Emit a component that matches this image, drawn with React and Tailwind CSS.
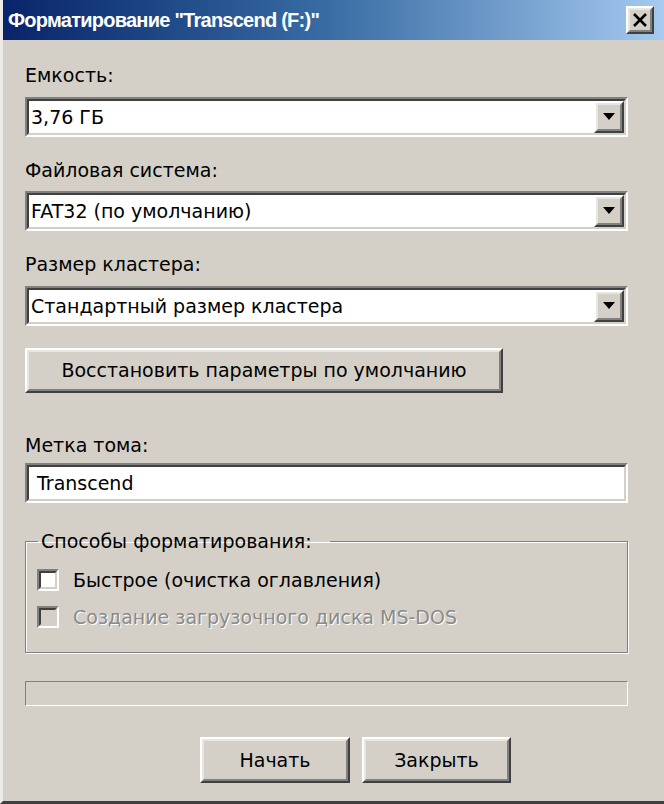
import React from "react";

const font = { fontFamily: '"DejaVu Sans", Verdana, sans-serif' };

function Label({ children, className = "" }) {
  return (
    <div className={"text-[19px] leading-[22px] text-black " + className}>{children}</div>
  );
}

function Sunken({ children, className = "" }) {
  return (
    <div
      className={
        "border-2 border-t-[#808080] border-l-[#808080] border-b-white border-r-white " +
        className
      }
    >
      <div className="h-full border-2 border-t-[#404040] border-l-[#404040] border-b-[#d4d0c8] border-r-[#d4d0c8] bg-white">
        {children}
      </div>
    </div>
  );
}

function Raised({ children, className = "" }) {
  return (
    <div
      className={
        "border-2 border-t-white border-l-white border-b-[#404040] border-r-[#404040] bg-[#d4d0c8] " +
        className
      }
    >
      <div className="flex h-full items-center justify-center border-2 border-t-[#e8e6e1] border-l-[#e8e6e1] border-b-[#808080] border-r-[#808080]">
        {children}
      </div>
    </div>
  );
}

function Combo({ value }) {
  return (
    <Sunken className="h-[40px]">
      <div className="flex h-full items-center">
        <div className="flex-1 pl-[2px] text-[19px] text-black">{value}</div>
        <Raised className="h-full w-[30px]">
          <svg width="12" height="8" viewBox="0 0 12 8">
            <polygon points="0,0 12,0 6,7" fill="#000" />
          </svg>
        </Raised>
      </div>
    </Sunken>
  );
}

function Check({ children, disabled }) {
  return (
    <div className="flex items-center gap-[14px]">
      <div className="h-[22px] w-[22px] border-2 border-t-[#808080] border-l-[#808080] border-b-white border-r-white">
        <div
          className={
            "h-full w-full border-2 border-t-[#404040] border-l-[#404040] border-b-[#d4d0c8] border-r-[#d4d0c8] " +
            (disabled ? "bg-[#d4d0c8]" : "bg-white")
          }
        />
      </div>
      <div
        className={
          "text-[19px] leading-[22px] " +
          (disabled ? "text-[#8a8a8a] [text-shadow:1px_1px_0_#fff]" : "text-black")
        }
      >
        {children}
      </div>
    </div>
  );
}

export default function App() {
  return (
    <div
      style={font}
      className="flex h-[804px] w-[664px] flex-col overflow-hidden border-b-[3px] border-l-[3px] border-b-[#404040] border-l-[#ecebe7] bg-[#d4d0c8]"
    >
      <div className="flex h-[40px] shrink-0 items-center justify-between bg-gradient-to-r from-[#0a246a] via-[#3a6ea5] to-[#a6caf0] pl-[5px] pr-[10px]">
        <div
          className="text-[20px] font-bold leading-none tracking-[-0.75px] text-white"
          style={{ fontFamily: '"Liberation Sans", Arial, sans-serif' }}
        >
          Форматирование "Transcend (F:)"
        </div>
        <Raised className="h-[28px] w-[28px]">
          <svg width="16" height="14" viewBox="0 0 16 14">
            <path d="M2 1 L14 13 M14 1 L2 13" stroke="#000" strokeWidth="2.6" />
          </svg>
        </Raised>
      </div>

      <div className="flex flex-col pl-[22px] pr-[36px]">
        <Label className="mt-[24px]">Емкость:</Label>
        <div className="mt-[11px]">
          <Combo value="3,76 ГБ" />
        </div>
        <Label className="mt-[22px]">Файловая система:</Label>
        <div className="mt-[10px]">
          <Combo value="FAT32 (по умолчанию)" />
        </div>
        <Label className="mt-[22px]">Размер кластера:</Label>
        <div className="mt-[11px]">
          <Combo value="Стандартный размер кластера" />
        </div>
        <div className="mt-[22px]">
          <Raised className="h-[45px] w-[478px]">
            <span className="text-[19px] text-black">Восстановить параметры по умолчанию</span>
          </Raised>
        </div>
        <Label className="mt-[41px]">Метка тома:</Label>
        <div className="mt-[7px]">
          <Sunken className="h-[40px]">
            <div className="flex h-full items-center pl-[8px] text-[19px] text-black">Transcend</div>
          </Sunken>
        </div>
        <fieldset className="mt-[27px] h-[123px] border border-[#808080] px-[11px] pb-0 pt-[17px] shadow-[inset_1px_1px_0_#fff,1px_1px_0_#fff]">
          <legend className="ml-[1px] pl-[3px] pr-[18px] text-[19px] leading-[22px] text-black">
            Способы форматирования:
          </legend>
          <div className="flex flex-col gap-[15px]">
            <Check>Быстрое (очистка оглавления)</Check>
            <Check disabled>Создание загрузочного диска MS-DOS</Check>
          </div>
        </fieldset>
        <div className="mt-[28px] h-[25px] border border-t-[#808080] border-l-[#808080] border-b-white border-r-white" />
        <div className="mt-[31px] flex gap-[12px] pl-[175px]">
          <Raised className="h-[46px] w-[150px]">
            <span className="text-[19px] text-black">Начать</span>
          </Raised>
          <Raised className="h-[46px] w-[149px]">
            <span className="text-[19px] text-black">Закрыть</span>
          </Raised>
        </div>
      </div>
    </div>
  );
}
